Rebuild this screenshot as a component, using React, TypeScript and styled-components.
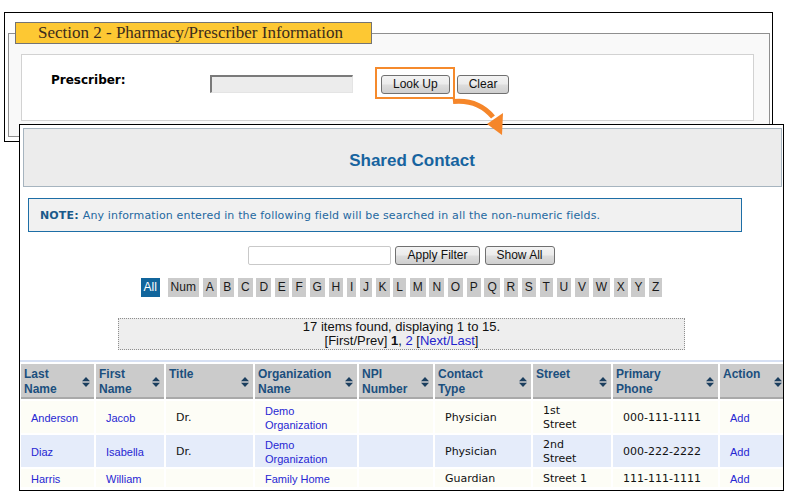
import React from "react";
import styled, { createGlobalStyle } from "styled-components";

const GlobalStyle = createGlobalStyle`
  html, body { margin: 0; padding: 0; background: #fff; }
  body { font-family: "DejaVu Sans", Verdana, sans-serif; color: #000; }
  * { box-sizing: border-box; }
`;

const Page = styled.div`
  position: relative;
  width: 790px;
  height: 502px;
  overflow: hidden;
  padding: 12px 0 0 4px;
`;

/* ---------- Window 1: prescriber form ---------- */

const FormWindow = styled.div`
  width: 769px;
  height: 130px;
  border: 1px solid #000;
  background: #fff;
  padding: 9px 2px 0 3px;
`;

const Section = styled.fieldset`
  margin: 0;
  min-width: 0;
  border: 1px solid #8f8f8f;
  background: #f9f9f9;
  padding: 10px 15px 15px 12px;
`;

const Legend = styled.legend`
  margin-left: -6px;
  height: 22px;
  width: 357px;
  padding: 0 0 0 22px;
  background: #fdc833;
  border: 1px solid #747474;
  font-family: "Liberation Serif", "DejaVu Serif", serif;
  font-size: 17px;
  line-height: 20px;
  color: #3b2c1c;
  white-space: nowrap;
`;

const PanelBody = styled.div`
  height: 67px;
  border: 1px solid #d2d2d2;
  background: #fff;
  display: flex;
  align-items: flex-start;
  padding: 12px 0 0 29px;
`;

const FieldLabel = styled.label`
  width: 159px;
  margin-top: 6px;
  font-family: "DejaVu Sans", Verdana, sans-serif;
  font-weight: bold;
  font-size: 12px;
  line-height: 15px;
  color: #000;
`;

const InsetInput = styled.div`
  width: 143px;
  height: 18px;
  margin-top: 8px;
  margin-right: 22px;
  background: #ececec;
  border-style: solid;
  border-width: 2px 1px 1px 2px;
  border-color: #7a7a7a #e4e4e4 #e4e4e4 #7a7a7a;
`;

const Highlight = styled.span`
  display: inline-flex;
  border: 2px solid #f58a2c;
  padding: 6px 3px 3px 4px;
`;

const Button = styled.button<{ $top?: number; $left?: number }>`
  height: 19px;
  padding: 0 11px;
  margin: ${(p) => `${p.$top ?? 0}px 0 0 ${p.$left ?? 0}px`};
  border: 1px solid #707070;
  border-radius: 3px;
  background: linear-gradient(#f3f3f3 0%, #ebebeb 48%, #dddddd 52%, #cfcfcf 100%);
  font-family: "Liberation Sans", Arial, sans-serif;
  font-size: 12px;
  line-height: 17px;
  color: #111;
  white-space: nowrap;
`;

/* ---------- Arrow overlay ---------- */

const ArrowSvg = styled.svg`
  position: absolute;
  left: 445px;
  top: 95px;
  z-index: 5;
`;

/* ---------- Window 2: shared contact lookup ---------- */

const LookupWindow = styled.div`
  position: absolute;
  left: 19px;
  top: 124px;
  width: 765px;
  height: 367px;
  border: 1px solid #000;
  background: #fff;
  overflow: hidden;
  display: flex;
  flex-direction: column;
`;

const TitleBar = styled.div`
  flex: none;
  margin: 3px 1px 0 3px;
  height: 59px;
  border: 1px solid #a6b4bf;
  background: #ececec;
  display: flex;
  align-items: center;
  justify-content: center;
  padding: 7px 0 0 19px;
`;

const Title = styled.h1`
  margin: 0;
  font-family: "Liberation Sans", Arial, sans-serif;
  font-weight: bold;
  font-size: 17px;
  color: #17649f;
`;

const Note = styled.div`
  flex: none;
  margin: 11px 0 0 8px;
  width: 714px;
  height: 34px;
  border: 1px solid #1d6ea6;
  background: #f1f1f1;
  display: flex;
  align-items: center;
  padding: 1px 0 0 11px;
  font-family: "DejaVu Sans", Verdana, sans-serif;
  font-size: 11px;
  letter-spacing: 0.15px;
  color: #2468a0;
  white-space: nowrap;
`;

const NoteLabel = styled.b`
  color: #1b5a8a;
  margin-right: 4px;
`;

const FilterRow = styled.div`
  flex: none;
  margin-top: 14px;
  display: flex;
  justify-content: center;
  gap: 4px;
`;

const FilterInput = styled.div`
  width: 143px;
  height: 19px;
  border: 1px solid #c9c9c9;
  border-radius: 2px;
  background: #fff;
`;

const AlphaRow = styled.div`
  flex: none;
  margin-top: 13px;
  display: flex;
  justify-content: center;
  gap: 3.7px;
`;

const AlphaItem = styled.span<{ $active?: boolean; $gapAfter?: boolean }>`
  height: 19px;
  padding: 0 3px;
  margin-right: ${(p) => (p.$gapAfter ? "4px" : "0")};
  background: ${(p) => (p.$active ? "#11659c" : "#cbcbcb")};
  color: ${(p) => (p.$active ? "#fff" : "#1a1a1a")};
  font-family: "Liberation Sans", Arial, sans-serif;
  font-size: 12px;
  line-height: 19px;
`;

const Pager = styled.div`
  flex: none;
  align-self: center;
  margin-top: 21px;
  width: 567px;
  height: 32px;
  border: 1px dotted #8e8e8e;
  background: #eeeeee;
  padding-top: 1px;
  text-align: center;
  font-family: "Liberation Sans", Arial, sans-serif;
  font-size: 13px;
  line-height: 14px;
  color: #111;
`;

const PagerLink = styled.span`
  color: #2323cc;
`;

const TableWrap = styled.div`
  flex: none;
  margin-top: 10px;
  border-top: 2px solid #d6e0f3;
`;

const Grid = styled.table`
  margin-left: -1px;
  border-collapse: separate;
  border-spacing: 2px;
  table-layout: fixed;
  width: 769px;
`;

const HeadCell = styled.th`
  padding: 3px 4px 0 3px;
  height: 35px;
  background: #cbcbcb;
  border-bottom: 2px solid #a9a9a9;
  text-align: left;
  vertical-align: top;
`;

const HeadInner = styled.div`
  height: 30px;
  display: flex;
  align-items: center;
  justify-content: space-between;
`;

const HeadLabel = styled.span`
  align-self: flex-start;
  font-family: "Liberation Sans", Arial, sans-serif;
  font-weight: bold;
  font-size: 12px;
  line-height: 15px;
  color: #1b4f7e;
`;

const Cell = styled.td<{ $alt?: boolean }>`
  padding: 3px 4px 1px 10px;
  background: ${(p) => (p.$alt ? "#e5ecfa" : "#fdfdf6")};
  vertical-align: middle;
  font-family: "DejaVu Sans", Verdana, sans-serif;
  font-size: 11px;
  line-height: 14px;
  color: #111;
`;

const CellLink = styled.a`
  display: block;
  font-family: "Liberation Sans", Arial, sans-serif;
  font-size: 11px;
  line-height: 14px;
  color: #2727d3;
  text-decoration: none;
`;

const SortIcon = () => (
  <svg width="8" height="10" viewBox="0 0 8 10">
    <path d="M0 4.2 L4 0 L8 4.2 Z M0 5.8 L8 5.8 L4 10 Z" fill="#1c3f5f" />
  </svg>
);

const columns: { lines: string[]; width: number }[] = [
  { lines: ["Last", "Name"], width: 73 },
  { lines: ["First", "Name"], width: 68 },
  { lines: ["Title"], width: 87 },
  { lines: ["Organization", "Name"], width: 102 },
  { lines: ["NPI", "Number"], width: 74 },
  { lines: ["Contact", "Type"], width: 96 },
  { lines: ["Street"], width: 78 },
  { lines: ["Primary", "Phone"], width: 105 },
  { lines: ["Action"], width: 66 },
];

type Row = {
  last: string;
  first: string;
  title: string;
  org: string;
  type: string;
  street: string[];
  phone: string;
};

const rows: Row[] = [
  { last: "Anderson", first: "Jacob", title: "Dr.", org: "Demo Organization", type: "Physician", street: ["1st", "Street"], phone: "000-111-1111" },
  { last: "Diaz", first: "Isabella", title: "Dr.", org: "Demo Organization", type: "Physician", street: ["2nd", "Street"], phone: "000-222-2222" },
  { last: "Harris", first: "William", title: "", org: "Family Home", type: "Guardian", street: ["Street 1"], phone: "111-111-1111" },
];

const letters = "ABCDEFGHIJKLMNOPQRSTUVWXYZ".split("");

export default function App() {
  return (
    <Page>
      <GlobalStyle />
      <FormWindow>
        <Section>
          <Legend>Section 2 - Pharmacy/Prescriber Information</Legend>
          <PanelBody>
            <FieldLabel>Prescriber:</FieldLabel>
            <InsetInput />
            <Highlight>
              <Button>Look Up</Button>
            </Highlight>
            <Button $top={8} $left={2}>Clear</Button>
          </PanelBody>
        </Section>
      </FormWindow>

      <LookupWindow>
        <TitleBar>
          <Title>Shared Contact</Title>
        </TitleBar>
        <Note>
          <NoteLabel>NOTE:</NoteLabel>
          Any information entered in the following field will be searched in all the non-numeric fields.
        </Note>
        <FilterRow>
          <FilterInput />
          <Button>Apply Filter</Button>
          <Button $left={1}>Show All</Button>
        </FilterRow>
        <AlphaRow>
          <AlphaItem $active $gapAfter>All</AlphaItem>
          <AlphaItem>Num</AlphaItem>
          {letters.map((l) => (
            <AlphaItem key={l}>{l}</AlphaItem>
          ))}
        </AlphaRow>
        <Pager>
          17 items found, displaying 1 to 15.
          <br />
          [First/Prev] <b>1</b>, <PagerLink>2</PagerLink> [<PagerLink>Next/Last</PagerLink>]
        </Pager>
        <TableWrap>
          <Grid>
            <colgroup>
              {columns.map((c, i) => (
                <col key={i} style={{ width: c.width }} />
              ))}
            </colgroup>
            <thead>
              <tr>
                {columns.map((c, i) => (
                  <HeadCell key={i}>
                    <HeadInner>
                      <HeadLabel>
                        {c.lines.map((ln, j) => (
                          <React.Fragment key={j}>
                            {j > 0 && <br />}
                            {ln}
                          </React.Fragment>
                        ))}
                      </HeadLabel>
                      <SortIcon />
                    </HeadInner>
                  </HeadCell>
                ))}
              </tr>
            </thead>
            <tbody>
              {rows.map((r, i) => {
                const alt = i % 2 === 1;
                return (
                  <tr key={r.last}>
                    <Cell $alt={alt}><CellLink>{r.last}</CellLink></Cell>
                    <Cell $alt={alt}><CellLink>{r.first}</CellLink></Cell>
                    <Cell $alt={alt}>{r.title}</Cell>
                    <Cell $alt={alt}><CellLink>{r.org}</CellLink></Cell>
                    <Cell $alt={alt}></Cell>
                    <Cell $alt={alt}>{r.type}</Cell>
                    <Cell $alt={alt}>
                      {r.street.map((s, j) => (
                        <React.Fragment key={j}>
                          {j > 0 && <br />}
                          {s}
                        </React.Fragment>
                      ))}
                    </Cell>
                    <Cell $alt={alt}>{r.phone}</Cell>
                    <Cell $alt={alt}><CellLink>Add</CellLink></Cell>
                  </tr>
                );
              })}
            </tbody>
          </Grid>
        </TableWrap>
      </LookupWindow>

      <ArrowSvg width="70" height="45" viewBox="0 0 70 45">
        <path d="M8 6.5 Q33 4 48 22" fill="none" stroke="#f5862a" strokeWidth="5" />
        <path d="M42 29 L58 18 L57 40 Z" fill="#f5862a" />
      </ArrowSvg>
    </Page>
  );
}
